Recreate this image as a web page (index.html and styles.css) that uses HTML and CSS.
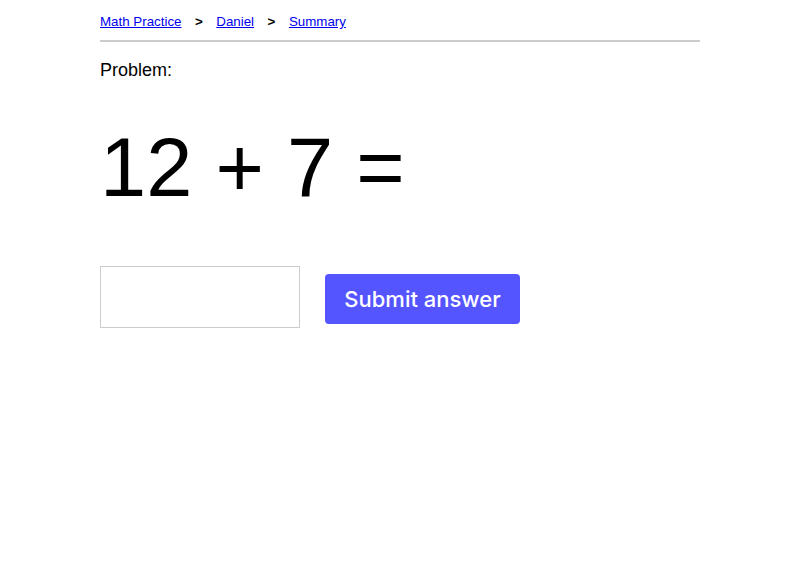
FILE: index.html
```html
<!DOCTYPE html>
<html>
<head>
<meta charset="utf-8">
<link rel="stylesheet" href="styles.css">
</head>
<body>
<div class="page">
  <nav class="crumbs">
    <a href="#">Math Practice</a>
    <span class="sep">&gt;</span>
    <a href="#">Daniel</a>
    <span class="sep">&gt;</span>
    <a href="#">Summary</a>
  </nav>
  <div class="label">Problem:</div>
  <div class="problem">12 + 7 =</div>
  <form class="answer">
    <input class="field" type="text">
    <button class="submit" type="button">Submit answer</button>
  </form>
</div>
</body>
</html>
```

FILE: styles.css
```css
html, body {
  margin: 0;
  padding: 0;
  background: #fff;
  font-family: "Liberation Sans", Arial, sans-serif;
  color: #000;
}
.page {
  width: 600px;
  margin: 0 auto;
}
.crumbs {
  display: flex;
  align-items: center;
  gap: 13.5px;
  font-size: 13.33px;
  padding-top: 14px;
  padding-bottom: 10px;
  border-bottom: 2px solid #cccccc;
  line-height: 16px;
}
.crumbs a {
  color: #0000ee;
  text-decoration: underline;
}
.sep {
  font-weight: bold;
}
.label {
  font-size: 18px;
  margin-top: 17px;
  line-height: 22px;
}
.problem {
  font-size: 83px;
  line-height: 96px;
  margin-top: 39px;
}
.answer {
  display: flex;
  align-items: flex-start;
  gap: 25px;
  margin-top: 50px;
}
.field {
  width: 200px;
  height: 62px;
  box-sizing: border-box;
  border: 1px solid #cccccc;
  margin: 0;
  padding: 0 8px;
  font-size: 22px;
  outline: none;
}
.submit {
  width: 195px;
  height: 50px;
  margin-top: 8px;
  background: #5555ff;
  color: #fff;
  border: none;
  border-radius: 4px;
  font-family: Inter, "Liberation Sans", sans-serif;
  font-size: 22px;
  font-weight: 500;
  padding: 0;
  cursor: pointer;
}
```
